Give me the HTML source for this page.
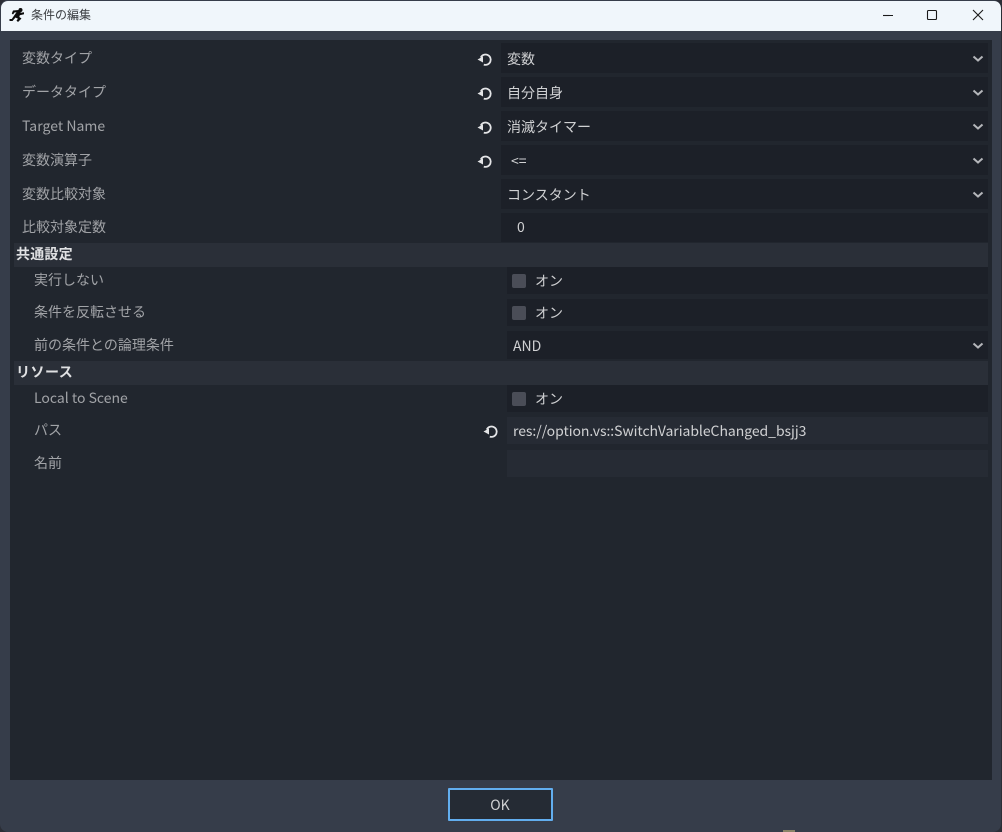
<!DOCTYPE html>
<html><head><meta charset="utf-8">
<style>
html,body{margin:0;padding:0;background:#2b2e36}
body{width:1002px;height:832px;overflow:hidden;position:relative;font-family:"Noto Sans CJK JP","Liberation Sans",sans-serif;font-size:14px}
div,svg,span{position:absolute}
.t{white-space:nowrap;line-height:20px;height:20px}
.l{color:#a1a3a7;left:22px}
.l2{color:#a1a3a7;left:34px}
.f{left:501px;width:487px;background:#1c2028}
.v{color:#d0d1d3}
.c{left:512px;width:14px;height:14px;background:#4a4d57;border-radius:2px}
</style></head><body>
<div id="win" style="left:0;top:0;width:1001px;height:832px;background:#363d4a;border-radius:8px;overflow:hidden">
<div style="left:1px;top:1px;width:1000px;height:30px;background:#f0f6fb;border-radius:7px 7px 0 0"></div>
<svg style="left:9px;top:7px" width="16" height="16" viewBox="0 0 16 16"><path d="M11.500 1a2 2 0 1 1 0 4a2 2 0 0 1 0-4zM4 3.500L9.500 3L12 5.800L15 5.300L15 7.200L10.800 8.200L10.300 10L12.500 11.500L9 15L7.500 13.500L9 11.700L6.500 10.500L3.500 14L0.500 14L0.500 12L2.800 12L5.500 8L7.500 5.200L5.500 5.500L4 7.500L2.800 6.500z" fill="#0c0c0c"/></svg>
<div class="t" style="left:31px;top:5px;font-size:12px;color:#3a3c40">条件の編集</div>
<svg style="left:880px;top:6px" width="110" height="18" viewBox="0 0 110 18" fill="none" stroke="#1a1a1a" stroke-width="1.100"><path d="M3 9.500H13"/><rect x="47.500" y="4.500" width="9" height="9" rx="1"/><path d="M93 4L103 14M103 4L93 14"/></svg>
<div style="left:10px;top:40px;width:982px;height:740px;background:#21262e"></div>

<div class="t l" style="top:48px">変数タイプ</div>
<div class="t l" style="top:82px">データタイプ</div>
<div class="t l" style="top:116px;letter-spacing:.03px">Target Name</div>
<div class="t l" style="top:150px">変数演算子</div>
<div class="t l" style="top:184px">変数比較対象</div>
<div class="t l" style="top:217px">比較対象定数</div>

<div class="f" style="top:43px;height:30px"></div>
<div class="f" style="top:77px;height:30px"></div>
<div class="f" style="top:111px;height:30px"></div>
<div class="f" style="top:145px;height:30px"></div>
<div class="f" style="top:179px;height:30px"></div>
<div class="f" style="top:213px;height:29px"></div>

<div class="t v" style="left:507px;top:49px">変数</div>
<div class="t v" style="left:507px;top:83px">自分自身</div>
<div class="t v" style="left:507px;top:117px">消滅タイマー</div>
<div class="t v" style="left:511px;top:151px">&lt;=</div>
<div class="t v" style="left:507px;top:185px">コンスタント</div>
<div class="t v" style="left:517px;top:217px">0</div>

<div style="left:14px;top:243px;width:974px;height:24px;background:#2a2f38"></div>
<div class="t" style="left:16px;top:244px;color:#e0e1e3;font-weight:700;letter-spacing:.2px">共通設定</div>
<div class="t l2" style="top:270px">実行しない</div>
<div class="t l2" style="top:302px">条件を反転させる</div>
<div class="t l2" style="top:335px">前の条件との論理条件</div>
<div class="f" style="left:507px;width:481px;top:267px;height:27px"></div>
<div class="f" style="left:507px;width:481px;top:299px;height:27px"></div>
<div class="f" style="left:507px;width:481px;top:331px;height:28px"></div>
<div class="c" style="top:274px"></div>
<div class="t v" style="left:535px;top:271px">オン</div>
<div class="c" style="top:306px"></div>
<div class="t v" style="left:535px;top:303px">オン</div>
<div class="t v" style="left:513px;top:336px">AND</div>

<div style="left:14px;top:361px;width:974px;height:24px;background:#2a2f38"></div>
<div class="t" style="left:16px;top:362px;color:#e0e1e3;font-weight:700;letter-spacing:.5px">リソース</div>
<div class="t l2" style="top:388px">Local to Scene</div>
<div class="t l2" style="top:420px">パス</div>
<div class="t l2" style="top:453px">名前</div>
<div class="f" style="left:507px;width:481px;top:385px;height:27px"></div>
<div class="c" style="top:392px"></div>
<div class="t v" style="left:535px;top:389px">オン</div>
<div class="f" style="left:507px;width:481px;top:417px;height:27px;background:#262b34"></div>
<div class="t v" style="left:513px;top:421px;letter-spacing:-.05px">res://option.vs::SwitchVariableChanged_bsjj3</div>
<div class="f" style="left:507px;width:481px;top:450px;height:27px;background:#262b34"></div>

<svg width="0" height="0"><defs>
<symbol id="r" viewBox="0 0 16 16"><path d="M3.800 6.500A5.200 5.200 0 1 1 6.800 13.600" fill="none" stroke="#e4e5e7" stroke-width="1.800"/><path d="M0.500 8.500L6 5.500L6 11.500z" fill="#e4e5e7"/></symbol>
<symbol id="a" viewBox="0 0 12 8"><path d="M1.500 1.500L6 5.500L10.500 1.500" fill="none" stroke="#b4b6ba" stroke-width="2"/></symbol>
</defs></svg>
<svg style="left:477px;top:51px" width="16" height="16"><use href="#r"/></svg>
<svg style="left:477px;top:85px" width="16" height="16"><use href="#r"/></svg>
<svg style="left:477px;top:119px" width="16" height="16"><use href="#r"/></svg>
<svg style="left:477px;top:153px" width="16" height="16"><use href="#r"/></svg>
<svg style="left:483px;top:423px" width="16" height="16"><use href="#r"/></svg>

<svg style="left:972px;top:55px" width="12" height="8"><use href="#a"/></svg>
<svg style="left:972px;top:89px" width="12" height="8"><use href="#a"/></svg>
<svg style="left:972px;top:123px" width="12" height="8"><use href="#a"/></svg>
<svg style="left:972px;top:157px" width="12" height="8"><use href="#a"/></svg>
<svg style="left:972px;top:191px" width="12" height="8"><use href="#a"/></svg>
<svg style="left:972px;top:342px" width="12" height="8"><use href="#a"/></svg>

<div style="left:448px;top:788px;width:101px;height:29px;border:2px solid #62aeef;background:#252b34;border-radius:1px"></div>
<div class="t" style="left:448px;width:104px;text-align:center;top:795px;color:#d0d1d3">OK</div>
<div style="left:783px;top:830px;width:12px;height:2px;background:#8a8468"></div>
</div>
</body></html>
